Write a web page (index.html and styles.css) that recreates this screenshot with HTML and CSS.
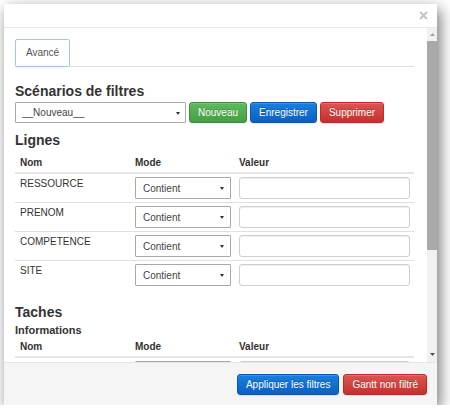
FILE: index.html
```html
<!DOCTYPE html>
<html lang="fr">
<head>
    <meta charset="UTF-8">
    <meta name="viewport" content="width=device-width, initial-scale=1.0">
    <title>Filtres</title>
    <link rel="stylesheet" href="styles.css">
</head>
<body>

<div class="modal">
    <div class="modal-header">
        <button class="close">&times;</button>
    </div>

    <div class="modal-main">
        <div class="modal-body">
            <ul class="nav-tabs">
                <li class="tab active">Avancé</li>
            </ul>

            <h4 class="section-title scenarios">Scénarios de filtres</h4>
            <div class="scenario-row">
                <div class="select-wrap scenario-select">
                    <select><option>__Nouveau__</option></select>
                </div>
                <button class="btn btn-success">Nouveau</button>
                <button class="btn btn-primary">Enregistrer</button>
                <button class="btn btn-danger">Supprimer</button>
            </div>

            <h4 class="section-title lignes">Lignes</h4>
            <table class="filter-table">
                <colgroup>
                    <col class="col-nom">
                    <col class="col-mode">
                    <col class="col-valeur">
                </colgroup>
                <thead>
                    <tr><th>Nom</th><th>Mode</th><th>Valeur</th></tr>
                </thead>
                <tbody>
                    <tr>
                        <td>RESSOURCE</td>
                        <td><div class="select-wrap"><select><option>Contient</option></select></div></td>
                        <td><input type="text" class="form-control"></td>
                    </tr>
                    <tr>
                        <td>PRENOM</td>
                        <td><div class="select-wrap"><select><option>Contient</option></select></div></td>
                        <td><input type="text" class="form-control"></td>
                    </tr>
                    <tr>
                        <td>COMPETENCE</td>
                        <td><div class="select-wrap"><select><option>Contient</option></select></div></td>
                        <td><input type="text" class="form-control"></td>
                    </tr>
                    <tr>
                        <td>SITE</td>
                        <td><div class="select-wrap"><select><option>Contient</option></select></div></td>
                        <td><input type="text" class="form-control"></td>
                    </tr>
                </tbody>
            </table>

            <h4 class="section-title taches">Taches</h4>
            <h5 class="sub-title">Informations</h5>
            <table class="filter-table">
                <colgroup>
                    <col class="col-nom">
                    <col class="col-mode">
                    <col class="col-valeur">
                </colgroup>
                <thead>
                    <tr><th>Nom</th><th>Mode</th><th>Valeur</th></tr>
                </thead>
                <tbody>
                    <tr>
                        <td></td>
                        <td><div class="select-wrap"><select></select></div></td>
                        <td><input type="text" class="form-control"></td>
                    </tr>
                </tbody>
            </table>
        </div>

        <div class="scrollbar">
            <div class="scroll-btn up">
                <svg width="5" height="3" viewBox="0 0 5 3"><polygon points="0,3 5,3 2.5,0" fill="#a3a3a3"/></svg>
            </div>
            <div class="scroll-thumb"></div>
            <div class="scroll-track"></div>
            <div class="scroll-btn down">
                <svg width="5" height="3" viewBox="0 0 5 3"><polygon points="0,0 5,0 2.5,3" fill="#505050"/></svg>
            </div>
        </div>
    </div>

    <div class="modal-footer">
        <button class="btn btn-primary">Appliquer les filtres</button>
        <button class="btn btn-danger">Gantt non filtré</button>
    </div>
</div>

</body>
</html>
```

FILE: styles.css
```css
* {
    margin: 0;
    padding: 0;
    box-sizing: border-box;
}

body {
    background: #fff;
    font-family: 'Liberation Sans', Arial, sans-serif;
    font-size: 10px;
    line-height: 14px;
    color: #333;
}

.modal {
    margin: 4px 0 0 4px;
    width: 433px;
    height: 401px;
    background: #fff;
    display: flex;
    flex-direction: column;
    box-shadow: 3px 5px 14px rgba(0, 0, 0, 0.55);
}

.modal-header {
    height: 24px;
    border-bottom: 1px solid #e8e8e8;
    display: flex;
    justify-content: flex-end;
    align-items: center;
    padding-right: 9px;
}

.close {
    background: none;
    border: 0;
    font-family: 'Liberation Sans', Arial, sans-serif;
    font-size: 16px;
    font-weight: bold;
    line-height: 16px;
    color: #c2c2c2;
    margin-top: 1px;
}

.modal-main {
    flex: 1;
    display: flex;
    overflow: hidden;
}

.modal-body {
    flex: 1;
    padding: 11px 13px 0 11px;
    overflow: hidden;
}

/* tabs */
.nav-tabs {
    list-style: none;
    display: flex;
    border-bottom: 1px solid #e0e0e0;
}

.tab {
    height: 28px;
    padding: 6px 10px;
    margin-bottom: -1px;
    border: 1px solid #a3c4f3;
    border-radius: 2px;
    background: #fff;
    color: #555;
}

/* titles */
.section-title {
    font-size: 14px;
    line-height: 16px;
    font-weight: bold;
    color: #333;
}

.scenarios {
    margin-top: 16px;
    margin-bottom: 3px;
}

.lignes {
    margin-top: 9px;
    margin-bottom: 5px;
}

.taches {
    margin-top: 15px;
}

.sub-title {
    font-size: 11px;
    line-height: 13px;
    font-weight: bold;
    margin-top: 4px;
}

/* scenario row */
.scenario-row {
    display: flex;
    gap: 3px;
}

.select-wrap {
    position: relative;
    display: block;
}

.select-wrap::after {
    content: '';
    position: absolute;
    right: 5px;
    top: 50%;
    margin-top: -1px;
    border-left: 2.5px solid transparent;
    border-right: 2.5px solid transparent;
    border-top: 3px solid #333;
}

.scenario-select::after {
    right: 6px;
}

select {
    -webkit-appearance: none;
    appearance: none;
    display: block;
    width: 96px;
    height: 22px;
    padding: 0 7px;
    border: 1px solid #a9a9a9;
    border-radius: 1px;
    background: #fff;
    font-family: 'Liberation Sans', Arial, sans-serif;
    font-size: 10px;
    color: #444;
}

.scenario-select select {
    width: 171px;
    height: 21px;
    padding: 0 6px;
}

.btn {
    height: 21px;
    padding: 0 8px;
    border: 1px solid transparent;
    border-radius: 3px;
    font-family: 'Liberation Sans', Arial, sans-serif;
    font-size: 10px;
    line-height: 19px;
    color: #fff;
    text-shadow: 0 -1px 0 rgba(0, 0, 0, 0.2);
    box-shadow: inset 0 1px 0 rgba(255, 255, 255, 0.15), 0 1px 1px rgba(0, 0, 0, 0.075);
}

.btn-success {
    background: linear-gradient(to bottom, #5fba5f, #449e44);
    border-color: #3e8f3e;
}

.btn-primary {
    background: linear-gradient(to bottom, #1a7fe0, #0a60c2);
    border-color: #0858b0;
}

.btn-danger {
    background: linear-gradient(to bottom, #dc5652, #c4302c);
    border-color: #b92c28;
}

/* tables */
.filter-table {
    width: 399px;
    table-layout: fixed;
    border-collapse: separate;
    border-spacing: 0;
}

.col-nom { width: 115px; }
.col-mode { width: 104px; }
.col-valeur { width: 180px; }

.filter-table th {
    text-align: left;
    font-weight: bold;
    padding: 3px 5px 2px;
    border-bottom: 2px solid #e6e6e6;
}

.filter-table td {
    vertical-align: top;
    padding: 3px 5px;
    color: #333;
}

.filter-table tr + tr td {
    border-top: 1px solid #e0e0e0;
}

.form-control {
    display: block;
    width: 171px;
    height: 22px;
    border: 1px solid #cfcfcf;
    border-radius: 3px;
    box-shadow: inset 0 1px 1px rgba(0, 0, 0, 0.075);
    background: #fff;
}

/* scrollbar */
.scrollbar {
    width: 10px;
    background: #f1f1f1;
    display: flex;
    flex-direction: column;
}

.scroll-btn {
    display: flex;
    justify-content: center;
    align-items: center;
}

.scroll-btn.up {
    height: 13px;
}

.scroll-btn.down {
    height: 15px;
}

.scroll-thumb {
    height: 209px;
    background: #a9a9a9;
}

.scroll-track {
    flex: 1;
}

/* footer */
.modal-footer {
    height: 43px;
    border-top: 1px solid #e5e5e5;
    background: #f5f5f5;
    display: flex;
    justify-content: flex-end;
    align-items: flex-start;
    gap: 4px;
    padding: 11px 10px 0 0;
}
```
